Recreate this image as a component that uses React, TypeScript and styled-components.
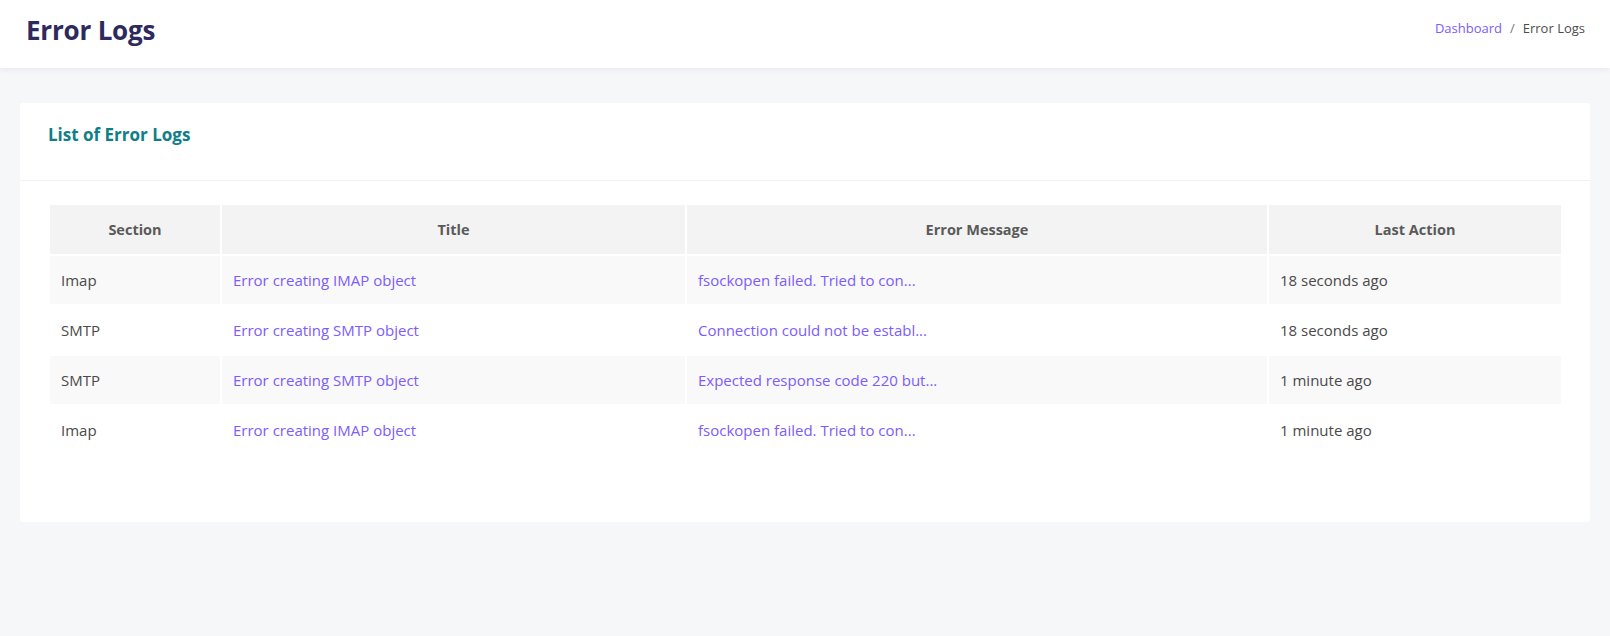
import React from "react";
import styled, { createGlobalStyle } from "styled-components";

interface ErrorLog {
  section: string;
  title: string;
  message: string;
  lastAction: string;
}

const logs: ErrorLog[] = [
  {
    section: "Imap",
    title: "Error creating IMAP object",
    message: "fsockopen failed. Tried to con...",
    lastAction: "18 seconds ago",
  },
  {
    section: "SMTP",
    title: "Error creating SMTP object",
    message: "Connection could not be establ...",
    lastAction: "18 seconds ago",
  },
  {
    section: "SMTP",
    title: "Error creating SMTP object",
    message: "Expected response code 220 but...",
    lastAction: "1 minute ago",
  },
  {
    section: "Imap",
    title: "Error creating IMAP object",
    message: "fsockopen failed. Tried to con...",
    lastAction: "1 minute ago",
  },
];

const App = () => {
  return (
    <>
      <GlobalStyle />
      <Page>
        <TopBar>
          <PageTitle>Error Logs</PageTitle>
          <Breadcrumb>
            <CrumbLink href="#">Dashboard</CrumbLink>
            <CrumbSep>/</CrumbSep>
            <CrumbCurrent>Error Logs</CrumbCurrent>
          </Breadcrumb>
        </TopBar>

        <Content>
          <Card>
            <CardHeader>
              <CardTitle>List of Error Logs</CardTitle>
            </CardHeader>
            <CardBody>
              <Table>
                <colgroup>
                  <col style={{ width: 171 }} />
                  <col style={{ width: 465 }} />
                  <col style={{ width: 582 }} />
                  <col />
                </colgroup>
                <thead>
                  <tr>
                    <Th>Section</Th>
                    <Th>Title</Th>
                    <Th>Error Message</Th>
                    <Th>Last Action</Th>
                  </tr>
                </thead>
                <tbody>
                  {logs.map((log, i) => (
                    <Row key={i} $striped={i % 2 === 0}>
                      <Td>{log.section}</Td>
                      <Td>
                        <CellLink href="#">{log.title}</CellLink>
                      </Td>
                      <Td>
                        <CellLink href="#">{log.message}</CellLink>
                      </Td>
                      <Td>{log.lastAction}</Td>
                    </Row>
                  ))}
                </tbody>
              </Table>
            </CardBody>
          </Card>
        </Content>
      </Page>
    </>
  );
};

export default App;

const GlobalStyle = createGlobalStyle`
  html, body {
    margin: 0;
    padding: 0;
    background: #f6f7f9;
  }
  body {
    font-family: "Open Sans", "Noto Sans", Arial, sans-serif;
    color: #4a4a4a;
  }
  * {
    box-sizing: border-box;
  }
`;

const Page = styled.div`
  min-height: 636px;
  background: #f6f7f9;
`;

const TopBar = styled.header`
  height: 68px;
  background: #ffffff;
  display: flex;
  align-items: center;
  justify-content: space-between;
  padding: 0 25px 0 26px;
  box-shadow: 0 2px 6px rgba(30, 40, 60, 0.06);
`;

const PageTitle = styled.h1`
  margin: 0;
  font-size: 26px;
  font-weight: 700;
  color: #2e2a5b;
  letter-spacing: -0.2px;
  position: relative;
  top: -4px;
`;

const Breadcrumb = styled.nav`
  display: flex;
  align-items: center;
  font-size: 13px;
  position: relative;
  top: -6px;
`;

const CrumbLink = styled.a`
  color: #7c5cfc;
  text-decoration: none;
`;

const CrumbSep = styled.span`
  color: #777;
  padding: 0 8px;
`;

const CrumbCurrent = styled.span`
  color: #4d4d4d;
`;

const Content = styled.main`
  padding: 35px 20px 0 20px;
`;

const Card = styled.section`
  background: #ffffff;
  border-radius: 3px;
  padding-bottom: 66px;
`;

const CardHeader = styled.div`
  height: 78px;
  display: flex;
  align-items: center;
  padding: 0 28px;
  border-bottom: 1px solid #f1f2f4;
  padding-bottom: 14px;
`;

const CardTitle = styled.h2`
  margin: 0;
  font-size: 17px;
  font-weight: 700;
  color: #0e7e88;
`;

const CardBody = styled.div`
  padding: 24px 29px 0 30px;
`;

const Table = styled.table`
  width: 100%;
  border-collapse: collapse;
  table-layout: fixed;
  font-size: 15px;
`;

const Th = styled.th`
  height: 50px;
  background: #f3f3f3;
  color: #5a5a5a;
  font-weight: 700;
  font-size: 14.5px;
  text-align: center;
  border: 2px solid #ffffff;
  border-top: none;
  &:first-child {
    border-left: none;
  }
  &:last-child {
    border-right: none;
  }
`;

const Row = styled.tr<{ $striped: boolean }>`
  background: ${(p) => (p.$striped ? "#f9f9f9" : "#ffffff")};
`;

const Td = styled.td`
  height: 50px;
  padding: 0 11px;
  color: #4a4a4a;
  border: 2px solid #ffffff;
  white-space: nowrap;
  &:first-child {
    border-left: none;
  }
  &:last-child {
    border-right: none;
  }
`;

const CellLink = styled.a`
  color: #7c5cfc;
  text-decoration: none;
`;
